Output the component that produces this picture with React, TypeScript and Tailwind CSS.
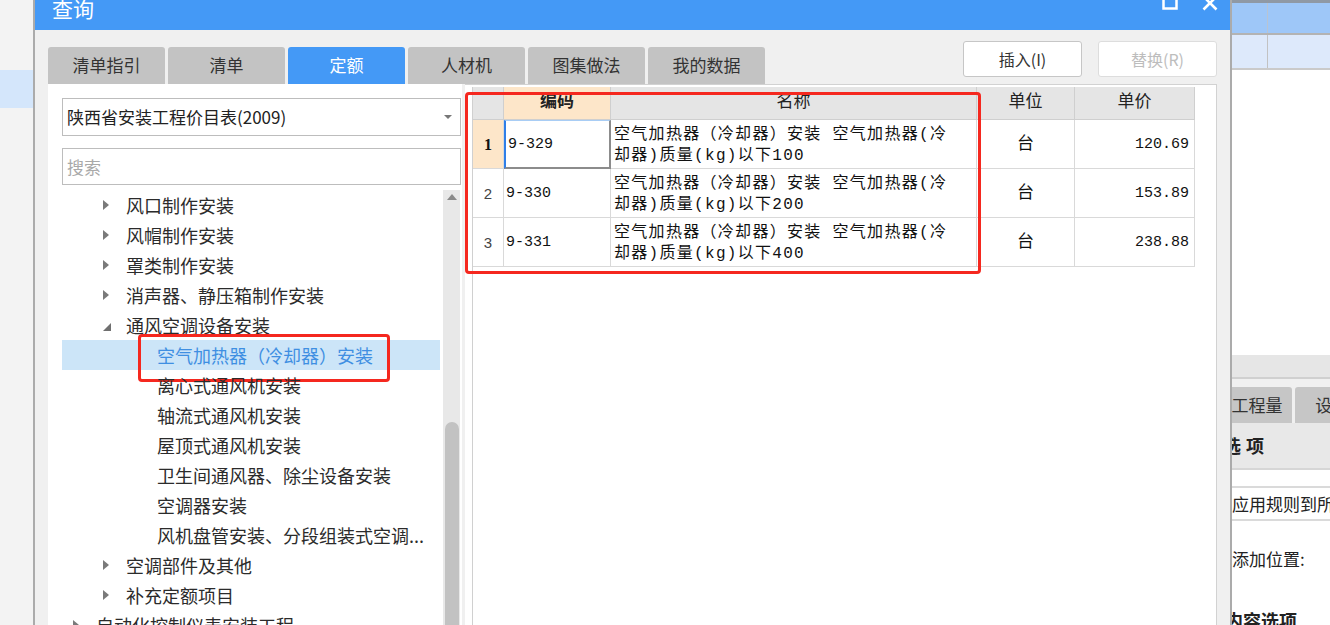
const TABS = ["清单指引", "清单", "定额", "人材机", "图集做法", "我的数据"]

type TreeNode = {
  label: string
  level: 1 | 2 | 3
  arrow?: "closed" | "open"
  selected?: boolean
}

const TREE: TreeNode[] = [
  { label: "风口制作安装", level: 2, arrow: "closed" },
  { label: "风帽制作安装", level: 2, arrow: "closed" },
  { label: "罩类制作安装", level: 2, arrow: "closed" },
  { label: "消声器、静压箱制作安装", level: 2, arrow: "closed" },
  { label: "通风空调设备安装", level: 2, arrow: "open" },
  { label: "空气加热器（冷却器）安装", level: 3, selected: true },
  { label: "离心式通风机安装", level: 3 },
  { label: "轴流式通风机安装", level: 3 },
  { label: "屋顶式通风机安装", level: 3 },
  { label: "卫生间通风器、除尘设备安装", level: 3 },
  { label: "空调器安装", level: 3 },
  { label: "风机盘管安装、分段组装式空调...", level: 3 },
  { label: "空调部件及其他", level: 2, arrow: "closed" },
  { label: "补充定额项目", level: 2, arrow: "closed" },
  { label: "自动化控制仪表安装工程", level: 1, arrow: "closed" },
]

const ROWS = [
  { no: "1", code: "9-329", l1: "空气加热器（冷却器）安装 空气加热器(冷", l2: "却器)质量(kg)以下100", unit: "台", price: "120.69" },
  { no: "2", code: "9-330", l1: "空气加热器（冷却器）安装 空气加热器(冷", l2: "却器)质量(kg)以下200", unit: "台", price: "153.89" },
  { no: "3", code: "9-331", l1: "空气加热器（冷却器）安装 空气加热器(冷", l2: "却器)质量(kg)以下400", unit: "台", price: "238.88" },
]

const indent = { 1: "pl-[11px]", 2: "pl-[41px]", 3: "pl-[72px]" }

function Arrow({ kind }: { kind?: "closed" | "open" }) {
  if (kind === "closed")
    return (
      <svg width="6" height="10" viewBox="0 0 6 10">
        <polygon points="0,0 6,5 0,10" fill="#7a7a7a" />
      </svg>
    )
  if (kind === "open")
    return (
      <svg width="8" height="8" viewBox="0 0 8 8" className="mt-[4px]">
        <polygon points="8,0 8,8 0,8" fill="#6f6f6f" />
      </svg>
    )
  return null
}

function TitleBar() {
  return (
    <div className="flex h-[30px] shrink-0 items-start bg-[#4499f6] text-white">
      <span className="ml-[17px] -mt-[4px] text-[21px] leading-[24px]">查询</span>
      <div className="ml-auto mr-[12px] flex items-start gap-[24px]">
        <svg width="16" height="14" viewBox="0 0 16 14" className="-mt-[4px]">
          <rect x="1.5" y="1.5" width="13" height="11" fill="none" stroke="white" strokeWidth="2.5" />
        </svg>
        <svg width="16" height="16" viewBox="0 0 16 16" className="-mt-[5px]">
          <path d="M1.5 1.5 L14.5 14.5 M14.5 1.5 L1.5 14.5" stroke="white" strokeWidth="2.6" />
        </svg>
      </div>
    </div>
  )
}

function LeftPanel() {
  return (
    <div className="flex w-[414px] shrink-0 flex-col bg-white pl-[14px] pr-[1px] pt-[14px]">
      <div className="flex h-[38px] shrink-0 items-center border border-[#bdbdbd] pl-[4px] pr-[8px] text-[17px] text-[#222]">
        <span>陕西省安装工程价目表(2009)</span>
        <svg width="8" height="4" viewBox="0 0 8 4" className="ml-auto">
          <polygon points="0,0 8,0 4,4" fill="#777" />
        </svg>
      </div>
      <div className="mt-[12px] flex h-[37px] shrink-0 items-center border border-[#bdbdbd] pl-[4px] text-[17px] text-[#a9a9a9]">
        搜索
      </div>
      <div className="mt-[5px] flex min-h-0 flex-1">
        <div className="flex-1">
          {TREE.map((n) => (
            <div
              key={n.label}
              className={`relative flex h-[30px] items-center text-[18px] ${indent[n.level]} ${
                n.selected ? "mr-[2px] bg-[#cce5f8] text-[#3f8fe2]" : "text-[#2b2b2b]"
              }`}
            >
              <div className="flex w-[23px] shrink-0 items-center">
                <Arrow kind={n.arrow} />
              </div>
              <span className="whitespace-nowrap">{n.label}</span>
              {n.selected && (
                <div className="absolute left-[76px] top-[-6px] h-[48px] w-[252px] rounded-[4px] border-[3px] border-[#f5281f]" />
              )}
            </div>
          ))}
        </div>
        <div className="ml-[1px] mr-[1px] flex w-[17px] shrink-0 flex-col items-center bg-[#e8e8e8]">
          <svg width="10" height="6" viewBox="0 0 10 6" className="mt-[4px]">
            <polygon points="5,0 10,6 0,6" fill="#8a8a8a" />
          </svg>
          <div className="mt-[222px] w-[14px] flex-1 rounded-t-[7px] bg-[#c2c2c2]" />
        </div>
      </div>
    </div>
  )
}

function RightPanel() {
  const head = "flex h-[33px] items-center justify-center border-b border-r border-[#cfcfcf] text-[17px] text-[#222]"
  const cell = "flex h-[49px] items-center border-b border-r border-[#d9d9d9]"
  return (
    <div className="relative flex-1 border-r border-t border-[#d2d2d2] bg-white pl-[7px] pt-[2px]">
      <div className="h-full border-l border-[#d0d0d0]">
        <div className="grid grid-cols-[31px_107px_366px_98px_120px] font-['Liberation_Mono','Noto_Sans_CJK_SC',monospace] text-[#111]">
          <div className={`${head} bg-[#e5e5e5]`} />
          <div className={`${head} bg-[#fde6c9] font-bold`}>编码</div>
          <div className={`${head} bg-[#e5e5e5]`}>名称</div>
          <div className={`${head} bg-[#e5e5e5]`}>单位</div>
          <div className={`${head} bg-[#e5e5e5]`}>单价</div>
          {ROWS.map((r, i) => (
            <div key={r.code} className="contents">
              <div
                className={`${cell} justify-center pt-[2px] ${
                  i === 0
                    ? "bg-[#fde6c9] font-['Liberation_Serif',serif] text-[16px] font-bold"
                    : "font-['Liberation_Sans',sans-serif] text-[15px] text-[#444]"
                }`}
              >
                {r.no}
              </div>
              <div
                className={`${cell} pl-[2px] pt-[2px] text-[15px] ${
                  i === 0
                    ? "border-b-2 border-l-2 border-r-2 border-t border-b-[#8c8c8c] border-l-[#2f7fe8] border-r-[#8c8c8c] border-t-[#a8cdf5]"
                    : ""
                }`}
              >
                {r.code}
              </div>
              <div className={`${cell} pl-[3px] pt-[3px] text-[16px] leading-[21px] tracking-[1.3px]`}>
                <div className="whitespace-nowrap">
                  {r.l1}
                  <br />
                  {r.l2}
                </div>
              </div>
              <div className={`${cell} justify-center pt-[2px] text-[17px]`}>{r.unit}</div>
              <div className={`${cell} justify-end pr-[5px] pt-[2px] text-[15px]`}>{r.price}</div>
            </div>
          ))}
        </div>
      </div>
      <div className="absolute left-0 top-[7px] h-[182px] w-[516px] rounded-[4px] border-[3px] border-[#f5281f]" />
    </div>
  )
}

function Dialog() {
  return (
    <div className="flex w-[1199px] shrink-0 flex-col border-x-2 border-[#ababab] bg-[#f0f0f0]">
      <TitleBar />
      <div className="flex min-h-0 flex-1 flex-col px-[13px] pt-[11px]">
        <div className="flex h-[43px] shrink-0 items-start">
          <div className="mt-[6px] flex gap-[3px]">
            {TABS.map((t) => (
              <div
                key={t}
                className={`flex h-[37px] w-[117px] items-center justify-center rounded-t-[3px] pb-[2px] text-[17px] ${
                  t === "定额" ? "bg-[#4499f6] text-white" : "bg-[#c3c3c3] text-[#333]"
                }`}
              >
                {t}
              </div>
            ))}
          </div>
          <div className="ml-auto flex gap-[16px]">
            <button className="h-[36px] w-[119px] rounded-[3px] border border-[#c6c6c6] bg-white text-[16px] text-[#333]">
              插入(I)
            </button>
            <button className="h-[36px] w-[119px] rounded-[3px] border border-[#dddddd] bg-white text-[16px] text-[#bdbdbd]">
              替换(R)
            </button>
          </div>
        </div>
        <div className="flex min-h-0 flex-1 gap-[3px]">
          <LeftPanel />
          <RightPanel />
        </div>
      </div>
    </div>
  )
}

function BackStrip() {
  return (
    <div className="min-w-0 flex-1 overflow-hidden bg-white">
      <div className="-ml-[10px] w-[150px]">
        <div className="flex h-[33px] border-t-[3px] border-[#8f99a5] bg-[#9ec7f8]">
          <div className="w-[46px] border-r border-[#b9c4d2]" />
        </div>
        <div className="flex h-[37px] border-y-2 border-[#b3b3b3] border-b-[#cacaca] bg-[#dde9fb]">
          <div className="w-[46px] border-r border-[#c2c2c2]" />
        </div>
        <div className="h-[285px]" />
        <div className="h-[24px] border-b-2 border-[#d0d0d0] bg-[#e6e6e6]" />
        <div className="flex h-[44px] items-end gap-[3px] bg-[#f0f0f0]">
          <div className="flex h-[36px] w-[74px] items-center justify-center rounded-tr-[3px] bg-[#c6c6c6] text-[17px] text-[#333]">
            工程量
          </div>
          <div className="flex h-[36px] w-[80px] items-center rounded-t-[3px] bg-[#c6c6c6] pl-[20px] text-[17px] text-[#333]">
            设置
          </div>
        </div>
        <div className="flex h-[47px] items-center border-b-2 border-[#d6d6d6] bg-[#e8e8e8] pl-[1px] text-[18px] font-bold tracking-[5px] text-[#222]">
          选项
        </div>
        <div className="h-[16px]" />
        <div className="flex h-[35px] items-center whitespace-nowrap border-y-2 border-[#dadada] pl-[10px] text-[17px] text-[#222]">
          应用规则到所有
        </div>
        <div className="flex h-[50px] items-end pl-[10px] text-[17px] text-[#222]">添加位置:</div>
        <div className="mt-[36px] pl-[3px] text-[18px] font-bold text-[#222]">内容选项</div>
      </div>
    </div>
  )
}

export default function App() {
  return (
    <div className="flex h-[625px] w-[1330px] overflow-hidden bg-white font-['Noto_Sans_CJK_SC',sans-serif]">
      <div className="w-[33px] shrink-0 bg-[#f3f3f3] pt-[70px]">
        <div className="h-[38px] bg-[#d4e6fb]" />
      </div>
      <Dialog />
      <BackStrip />
    </div>
  )
}
